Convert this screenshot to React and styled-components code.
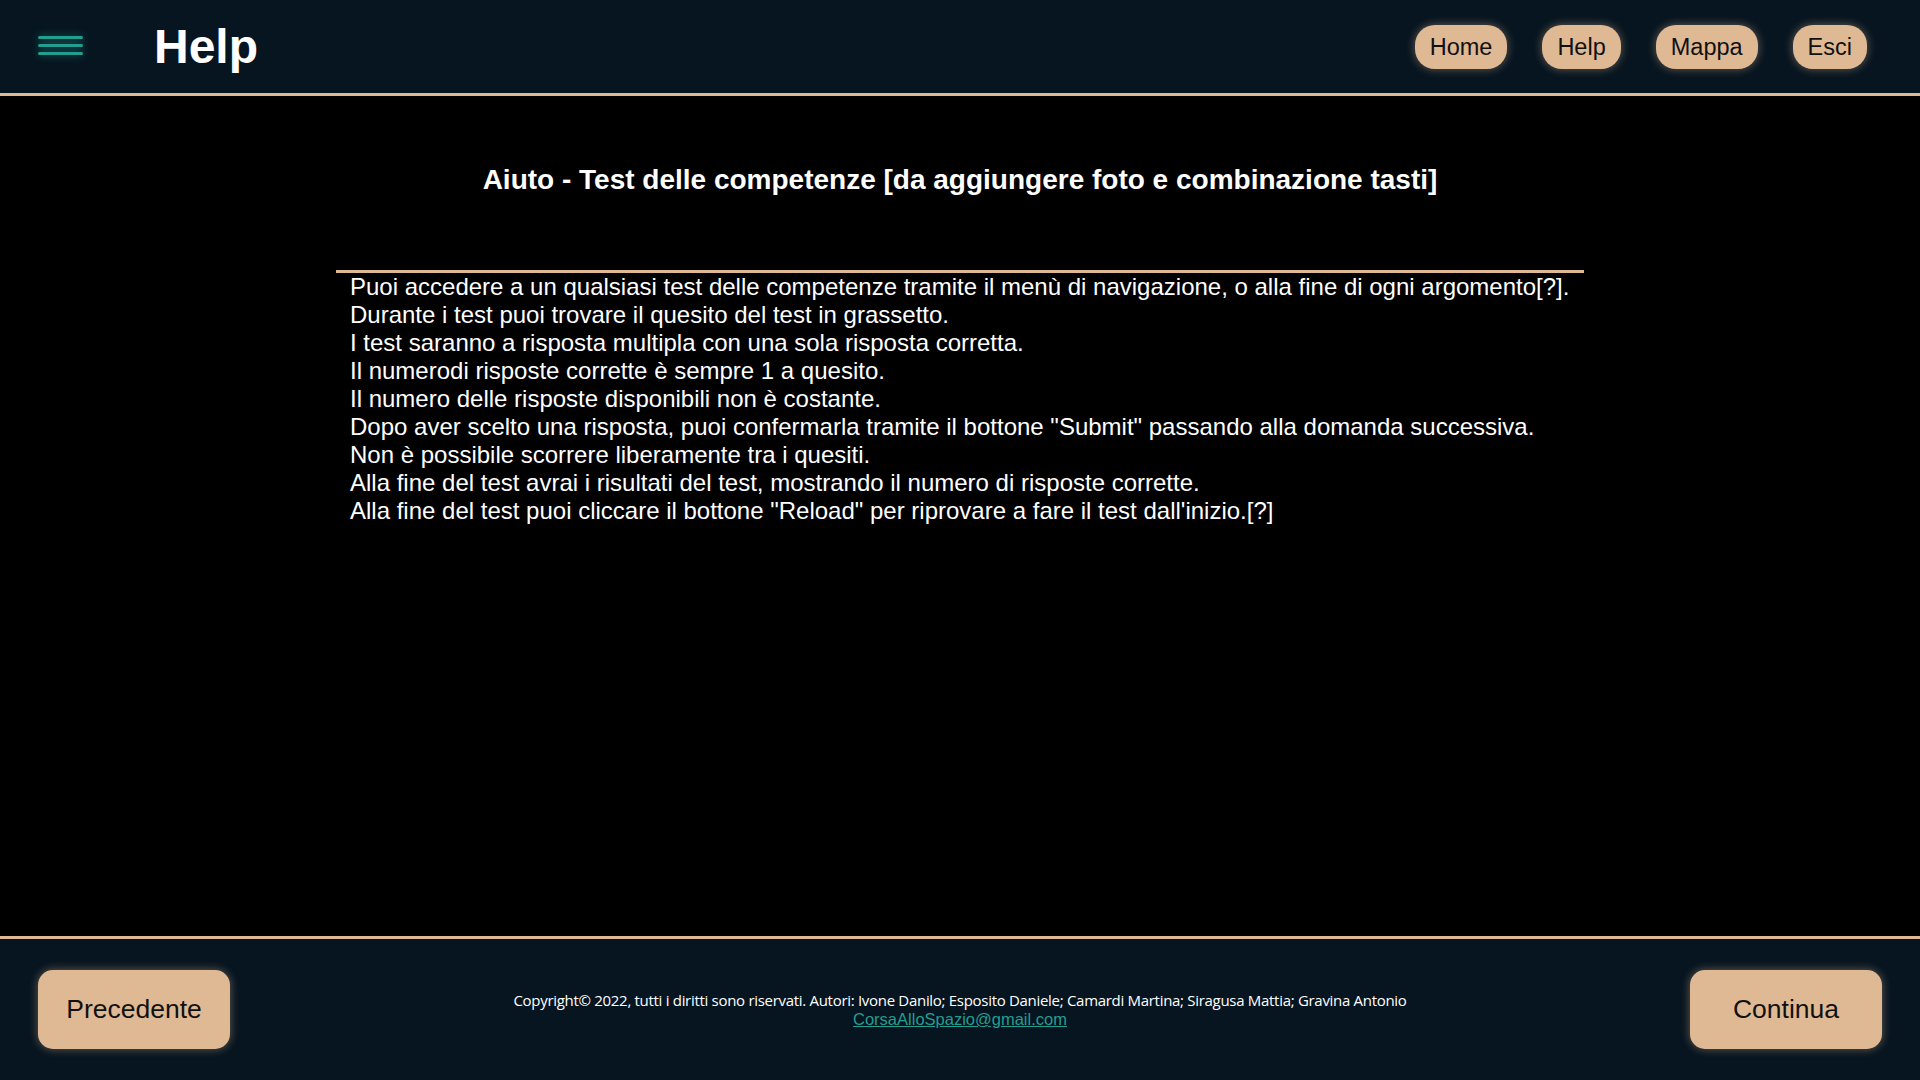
import React from "react";
import styled, { createGlobalStyle } from "styled-components";

const GlobalStyle = createGlobalStyle`
  body {
    margin: 0;
    background-color: #000;
    font-family: "Liberation Sans", Arial, sans-serif;
  }
`;

const Page = styled.div`
  display: flex;
  flex-direction: column;
  min-height: 100vh;
  background-color: #000;
`;

const Header = styled.header`
  display: flex;
  align-items: center;
  height: 93px;
  padding: 0 53px 0 38px;
  background-color: #071520;
  border-bottom: 3px solid #dfb994;
`;

const Burger = styled.div`
  display: flex;
  flex-direction: column;
  gap: 4.6px;
  width: 45px;
  margin-top: -2px;
  filter: drop-shadow(0 0 4px rgba(34, 158, 144, 0.6));
`;

const BurgerLine = styled.span`
  display: block;
  height: 3px;
  border-radius: 2px;
  background-color: #229e90;
`;

const PageTitle = styled.h1`
  margin: 0 0 0 71px;
  font-size: 48px;
  font-weight: bold;
  color: #fff;
`;

const Nav = styled.nav`
  display: flex;
  gap: 35px;
  margin-left: auto;
`;

const NavButton = styled.button`
  padding: 8px 15px;
  border: none;
  border-radius: 20px;
  background-color: #dfb994;
  color: #111;
  font-family: "Liberation Sans", Arial, sans-serif;
  font-size: 23.5px;
  line-height: 28px;
  box-shadow: 0 0 10px rgba(223, 185, 148, 0.45);
  cursor: pointer;
`;

const Main = styled.main`
  flex: 1;
  padding-top: 68px;
  color: #fff;
`;

const Heading = styled.h2`
  margin: 0 0 74px 0;
  text-align: center;
  font-size: 28px;
  line-height: 32px;
  font-weight: bold;
`;

const HelpBox = styled.div`
  width: 65%;
  margin: 0 auto;
  padding: 0 14px;
  box-sizing: border-box;
  border-top: 3px solid #dfb994;
`;

const HelpLine = styled.p`
  margin: 0;
  font-size: 24px;
  line-height: 28px;
`;

const Footer = styled.footer`
  display: flex;
  align-items: center;
  justify-content: space-between;
  height: 141px;
  padding: 0 38px;
  background-color: #071520;
  border-top: 3px solid #dfb994;
`;

const PageButton = styled.button`
  width: 192px;
  height: 79px;
  border: none;
  border-radius: 15px;
  background-color: #dfb994;
  color: #111;
  font-family: "Liberation Sans", Arial, sans-serif;
  font-size: 26.5px;
  box-shadow: 0 0 10px rgba(223, 185, 148, 0.45);
  cursor: pointer;
`;

const Credits = styled.div`
  display: flex;
  flex-direction: column;
  align-items: center;
  gap: 0;
`;

const Copyright = styled.span`
  font-family: "Open Sans", sans-serif;
  font-size: 15px;
  letter-spacing: -0.3px;
  line-height: 20px;
  color: #fff;
`;

const Mail = styled.a`
  font-family: "Liberation Sans", Arial, sans-serif;
  font-size: 16.5px;
  line-height: 19px;
  color: #229e90;
  text-decoration: underline;
`;

const lines = [
  "Puoi accedere a un qualsiasi test delle competenze tramite il menù di navigazione, o alla fine di ogni argomento[?].",
  "Durante i test puoi trovare il quesito del test in grassetto.",
  "I test saranno a risposta multipla con una sola risposta corretta.",
  "Il numerodi risposte corrette è sempre 1 a quesito.",
  "Il numero delle risposte disponibili non è costante.",
  'Dopo aver scelto una risposta, puoi confermarla tramite il bottone "Submit" passando alla domanda successiva.',
  "Non è possibile scorrere liberamente tra i quesiti.",
  "Alla fine del test avrai i risultati del test, mostrando il numero di risposte corrette.",
  'Alla fine del test puoi cliccare il bottone "Reload" per riprovare a fare il test dall\'inizio.[?]',
];

const App = () => {
  return (
    <Page>
      <GlobalStyle />
      <Header>
        <Burger>
          <BurgerLine />
          <BurgerLine />
          <BurgerLine />
        </Burger>
        <PageTitle>Help</PageTitle>
        <Nav>
          <NavButton>Home</NavButton>
          <NavButton>Help</NavButton>
          <NavButton>Mappa</NavButton>
          <NavButton>Esci</NavButton>
        </Nav>
      </Header>
      <Main>
        <Heading>
          Aiuto - Test delle competenze [da aggiungere foto e combinazione tasti]
        </Heading>
        <HelpBox>
          {lines.map((line, i) => (
            <HelpLine key={i}>{line}</HelpLine>
          ))}
        </HelpBox>
      </Main>
      <Footer>
        <PageButton>Precedente</PageButton>
        <Credits>
          <Copyright>
            Copyright© 2022, tutti i diritti sono riservati. Autori: Ivone Danilo; Esposito Daniele; Camardi Martina; Siragusa Mattia; Gravina Antonio
          </Copyright>
          <Mail href="#">CorsaAlloSpazio@gmail.com</Mail>
        </Credits>
        <PageButton>Continua</PageButton>
      </Footer>
    </Page>
  );
};

export default App;
